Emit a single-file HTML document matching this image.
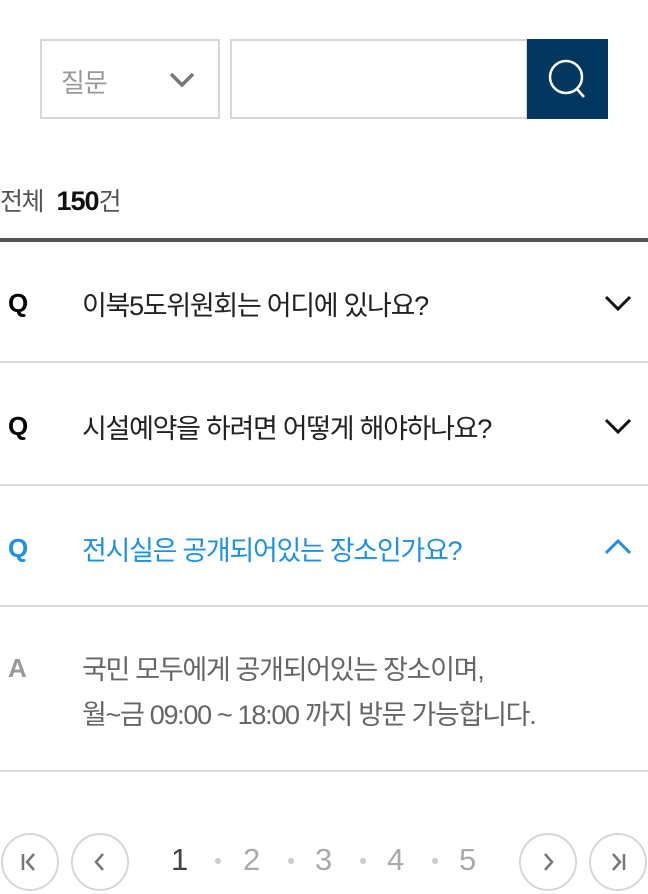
<!DOCTYPE html>
<html><head><meta charset="utf-8"><style>
*{margin:0;padding:0;box-sizing:border-box}
body{width:648px;height:892px;background:#fff;font-family:"Liberation Sans","Noto Sans CJK KR",sans-serif;position:relative;overflow:hidden}
.abs{position:absolute}
.sel{left:40px;top:39px;width:180px;height:80px;border:2px solid #d5d8d8}
.inp{left:230px;top:39px;width:298px;height:80px;border:2px solid #d5d8d8}
.btn{left:527px;top:39px;width:81px;height:80px;background:#03375f}
.q{position:absolute;left:8px;font-weight:bold;font-size:26px}
.t{position:absolute;left:82px;font-size:27px;letter-spacing:-1.3px;color:#222}
.line{position:absolute;left:0;width:648px;height:2px;background:#d8dbdb}
.c{position:absolute;top:833px;width:58px;height:58px;border:2px solid #d5d8d8;border-radius:50%}
.n{position:absolute;top:842px;font-size:31px;color:#aaa}
.d{position:absolute;top:858px;width:6px;height:6px;border-radius:50%;background:#ccc}
</style></head><body>
<div class="abs sel"><span class="abs" style="left:19px;top:22px;font-size:26px;color:#999;letter-spacing:-1px">질문</span>
<svg class="abs" style="left:126px;top:29px" width="28" height="18"><path d="M3 4 L14 15 L25 4" stroke="#777" stroke-width="3.5" fill="none"/></svg></div>
<div class="abs inp"></div>
<div class="abs btn"><svg width="81" height="80"><circle cx="39" cy="38" r="16" stroke="#fff" stroke-width="2.5" fill="none"/><path d="M50 50 L57 58" stroke="#fff" stroke-width="2.5"/></svg></div>
<div class="abs" style="left:0;top:182px;font-size:25px;color:#555;letter-spacing:-1.5px">전체 <span style="color:#111;font-size:27px;margin-left:8px;font-weight:bold;letter-spacing:-1px">150</span>건</div>
<div class="abs" style="left:0;top:238px;width:648px;height:4px;background:#555"></div>

<div class="q" style="top:288px">Q</div><div class="t" style="top:284px">이북5도위원회는 어디에 있나요?</div>
<svg class="abs" style="left:603px;top:294px" width="30" height="18"><path d="M3 3 L15 15 L27 3" stroke="#111" stroke-width="3" fill="none"/></svg>
<div class="line" style="top:361px"></div>
<div class="q" style="top:411px">Q</div><div class="t" style="top:407px">시설예약을 하려면 어떻게 해야하나요?</div>
<svg class="abs" style="left:603px;top:417px" width="30" height="18"><path d="M3 3 L15 15 L27 3" stroke="#111" stroke-width="3" fill="none"/></svg>
<div class="line" style="top:484px"></div>
<div class="q" style="top:533px;color:#1e90e8">Q</div><div class="t" style="top:529px;color:#1e90e8">전시실은 공개되어있는 장소인가요?</div>
<svg class="abs" style="left:603px;top:538px" width="30" height="18"><path d="M3 15 L15 3 L27 15" stroke="#1e90e8" stroke-width="3" fill="none"/></svg>
<div class="line" style="top:605px"></div>
<div class="q" style="top:653px;color:#999">A</div>
<div class="t" style="top:648px;color:#666;line-height:45px">국민 모두에게 공개되어있는 장소이며,<br>월~금 09:00 ~ 18:00 까지 방문 가능합니다.</div>
<div class="line" style="top:770px"></div>

<div class="c" style="left:1px"><svg width="54" height="54"><path d="M20 19 V35 M31 19 L24 27 L31 35" stroke="#777" stroke-width="2.5" fill="none"/></svg></div>
<div class="c" style="left:71px"><svg width="54" height="54"><path d="M30 19 L23 27 L30 35" stroke="#777" stroke-width="2.5" fill="none"/></svg></div>
<div class="n" style="left:171px;color:#444">1</div>
<div class="d" style="left:215px"></div>
<div class="n" style="left:243px">2</div>
<div class="d" style="left:288px"></div>
<div class="n" style="left:315px">3</div>
<div class="d" style="left:360px"></div>
<div class="n" style="left:387px">4</div>
<div class="d" style="left:432px"></div>
<div class="n" style="left:459px">5</div>
<div class="c" style="left:519px"><svg width="54" height="54"><path d="M24 19 L31 27 L24 35" stroke="#777" stroke-width="2.5" fill="none"/></svg></div>
<div class="c" style="left:589px"><svg width="54" height="54"><path d="M22 19 L29 27 L22 35 M33 19 V35" stroke="#777" stroke-width="2.5" fill="none"/></svg></div>
</body></html>
